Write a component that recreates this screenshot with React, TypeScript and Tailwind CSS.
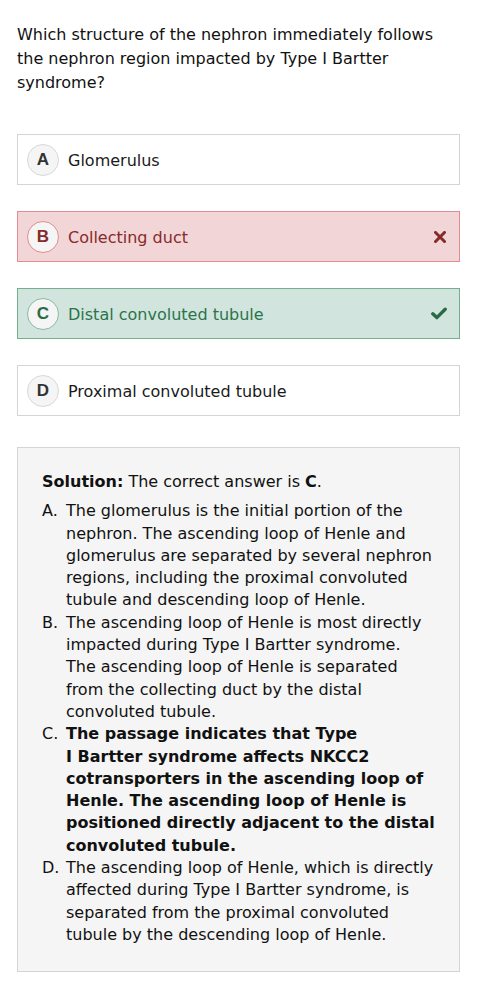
import React from "react";

const font = { fontFamily: '"DejaVu Sans", Verdana, sans-serif' };

type Opt = { letter: string; text: string; state: "none" | "wrong" | "right" };

const options: Opt[] = [
  { letter: "A", text: "Glomerulus", state: "none" },
  { letter: "B", text: "Collecting duct", state: "wrong" },
  { letter: "C", text: "Distal convoluted tubule", state: "right" },
  { letter: "D", text: "Proximal convoluted tubule", state: "none" },
];

function Option({ o }: { o: Opt }) {
  const box =
    o.state === "wrong"
      ? "bg-[#f2d5d7] border-[#e08c90] text-[#862b2b]"
      : o.state === "right"
      ? "bg-[#d2e4de] border-[#74b090] text-[#2a744a]"
      : "bg-white border-[#d4d4d4] text-[#1a1a1a]";
  const circle =
    o.state === "wrong"
      ? "border-[#e08c90] text-[#862b2b]"
      : o.state === "right"
      ? "border-[#86bc9f] text-[#2a6a45]"
      : "border-[#d8d8d8] text-[#333333]";
  return (
    <div className={`flex items-center h-[51px] border pl-[9px] pr-[12px] ${box}`}>
      <div
        className={`w-[32px] h-[32px] rounded-full border bg-[#f5f5f5] flex items-center justify-center text-[17px] font-bold ${circle}`}
        style={{ fontFamily: '"Liberation Sans", Arial, sans-serif' }}
      >
        {o.letter}
      </div>
      <div className="ml-[9px] text-[16px] leading-[24px] flex-1 pt-[2px]">{o.text}</div>
      {o.state === "wrong" && (
        <svg width="12" height="12" viewBox="0 0 12 12" className="mr-[1px]">
          <path d="M1.5 1.5 L10.5 10.5 M10.5 1.5 L1.5 10.5" stroke="#862b2b" strokeWidth="3" strokeLinecap="square" />
        </svg>
      )}
      {o.state === "right" && (
        <svg width="16" height="13" viewBox="0 0 16 13">
          <path d="M1.8 6.8 L5.8 10.6 L14.2 2.2" stroke="#2a6a45" strokeWidth="3.4" fill="none" strokeLinecap="round" strokeLinejoin="round" />
        </svg>
      )}
    </div>
  );
}

export default function App() {
  return (
    <div className="bg-white min-h-[1004px] text-[#111111]" style={font}>
      <div className="ml-[17px] w-[443px] pt-[23px]">
        <p className="text-[16px] leading-[24px] pr-[20px]">
          Which structure of the nephron immediately follows the nephron region impacted by Type I Bartter syndrome?
        </p>
        <div className="mt-[39px] flex flex-col gap-[26px]">
          {options.map((o) => (
            <Option key={o.letter} o={o} />
          ))}
        </div>
        <div className="mt-[31px] bg-[#f5f5f5] border border-[#d4d4d4] pl-[24px] pr-[20px] pt-[23px] pb-[25px] text-[16px] leading-[22.3px]">
          <p>
            <b>Solution:</b> The correct answer is <b>C</b>.
          </p>
          <ol className="mt-[7px]">
            <li className="flex">
              <span className="w-[24px] shrink-0">A.</span>
              <span>
                The glomerulus is the initial portion of the nephron. The ascending loop of Henle and glomerulus are separated by several nephron regions, including the proximal convoluted tubule and descending loop of Henle.
              </span>
            </li>
            <li className="flex">
              <span className="w-[24px] shrink-0">B.</span>
              <span>
                The ascending loop of Henle is most directly impacted during Type I Bartter syndrome.
                <br />
                The ascending loop of Henle is separated
                <br />
                from the collecting duct by the distal
                <br />
                convoluted tubule.
              </span>
            </li>
            <li className="flex">
              <span className="w-[24px] shrink-0">C.</span>
              <span className="font-bold">
                The passage indicates that Type I&nbsp;Bartter syndrome affects NKCC2 cotransporters in the ascending loop of Henle. The ascending loop of Henle is positioned directly adjacent to the distal convoluted tubule.
              </span>
            </li>
            <li className="flex">
              <span className="w-[24px] shrink-0">D.</span>
              <span>
                The ascending loop of Henle, which is directly affected during Type I Bartter syndrome, is separated from the proximal convoluted tubule by the descending loop of Henle.
              </span>
            </li>
          </ol>
        </div>
      </div>
    </div>
  );
}
